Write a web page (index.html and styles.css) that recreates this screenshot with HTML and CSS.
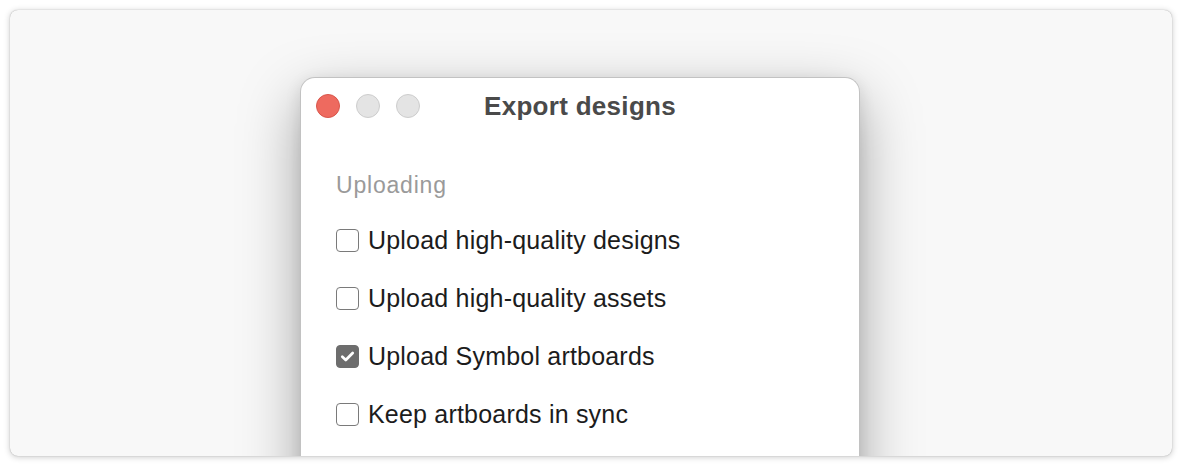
FILE: index.html
```html
<!DOCTYPE html>
<html lang="en">
<head>
<meta charset="utf-8">
<title>Export designs</title>
<link rel="stylesheet" href="styles.css">
</head>
<body>
<div class="stage">
  <div class="dialog">
    <div class="titlebar">
      <div class="lights">
        <span class="light light-close"></span>
        <span class="light light-min"></span>
        <span class="light light-max"></span>
      </div>
      <div class="title">Export designs</div>
      <div class="spacer"></div>
    </div>
    <div class="content">
      <div class="section-label">Uploading</div>
      <label class="option"><span class="box"></span><span class="option-text">Upload high-quality designs</span></label>
      <label class="option"><span class="box"></span><span class="option-text">Upload high-quality assets</span></label>
      <label class="option"><span class="box box-checked"><svg viewBox="0 0 23 23" width="23" height="23"><path d="M5.8 11.8 L9.6 15.4 L17.2 7.6" fill="none" stroke="#fff" stroke-width="3" stroke-linecap="round" stroke-linejoin="round"/></svg></span><span class="option-text">Upload Symbol artboards</span></label>
      <label class="option"><span class="box"></span><span class="option-text">Keep artboards in sync</span></label>
    </div>
  </div>
</div>
</body>
</html>
```

FILE: styles.css
```css
html, body {
  margin: 0;
  padding: 0;
  background: #ffffff;
}

body {
  padding: 10px;
  font-family: "Liberation Sans", Arial, sans-serif;
}

.stage {
  height: 446px;
  border-radius: 8px;
  background: #f8f8f8;
  box-shadow: 0 0 1px rgba(0, 0, 0, 0.35), 0 1px 6px rgba(0, 0, 0, 0.22);
  overflow: hidden;
  display: flex;
  justify-content: flex-start;
  padding: 67px 0 0 290px;
  box-sizing: border-box;
}

.dialog {
  width: 560px;
  height: 460px;
  flex: none;
  box-sizing: border-box;
  background: #ffffff;
  border: 1px solid #c2c2c2;
  border-bottom: none;
  border-radius: 15px 15px 0 0;
  box-shadow: 0 22px 60px rgba(0, 0, 0, 0.34), 0 4px 16px rgba(0, 0, 0, 0.1);
}

.titlebar {
  display: grid;
  grid-template-columns: 1fr auto 1fr;
  align-items: center;
  height: 56px;
  padding: 0 15px;
}

.lights {
  display: flex;
  gap: 16px;
}

.light {
  width: 24px;
  height: 24px;
  border-radius: 50%;
  box-sizing: border-box;
  background: #e4e4e4;
  border: 1px solid #cdcdcd;
}

.light-close {
  background: #ee6a5f;
  border-color: #d9564b;
}

.title {
  font-size: 26px;
  font-weight: bold;
  color: #4a4a4a;
  letter-spacing: 0.3px;
  padding-top: 1px;
}

.content {
  padding: 38px 35px 0;
  display: flex;
  flex-direction: column;
}

.section-label {
  font-size: 23px;
  color: #9a9a9a;
  letter-spacing: 0.8px;
  margin-bottom: 24px;
}

.option {
  display: flex;
  align-items: center;
  gap: 9px;
  height: 34px;
  margin-bottom: 24px;
  font-size: 25px;
  letter-spacing: 0.2px;
  color: #1c1c1c;
}

.box {
  width: 23px;
  height: 23px;
  box-sizing: border-box;
  border: 1.5px solid #7a7a7a;
  border-radius: 4px;
  background: #ffffff;
  flex: none;
  display: flex;
  align-items: center;
  justify-content: center;
}

.box-checked {
  background: #6d6d6d;
  border-color: #6d6d6d;
}

.box-checked svg {
  display: block;
}
```
